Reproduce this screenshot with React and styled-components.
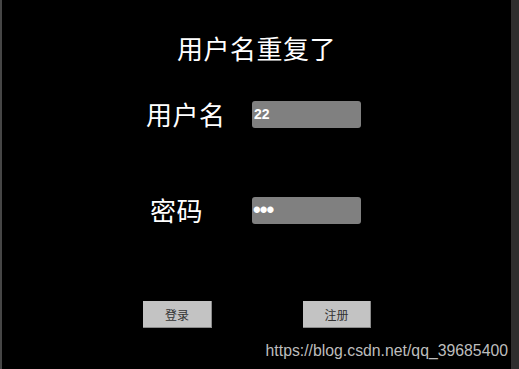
import React from "react";
import styled, { createGlobalStyle } from "styled-components";

const Global = createGlobalStyle`
  html, body { margin: 0; padding: 0; background: #000; }
  body { width: 519px; height: 369px; overflow: hidden; }
`;

const Frame = styled.div`
  display: flex;
  width: 519px;
  height: 369px;
  background: #000;
`;

const Edge = styled.div`
  width: ${(p) => p.$w}px;
  flex: none;
  background: ${(p) => p.$c};
`;

const Main = styled.div`
  flex: 1;
  display: flex;
  flex-direction: column;
  font-family: "Noto Sans CJK SC", "Noto Sans", sans-serif;
  color: #fff;
`;

const Title = styled.h1`
  margin: 30px 0 0;
  font-size: 26px;
  font-weight: 400;
  line-height: 36px;
  text-align: center;
  letter-spacing: 0.5px;
`;

const Form = styled.div`
  display: flex;
  flex-direction: column;
  gap: 60px;
  margin-top: 30px;
  padding-left: 144px;
`;

const Row = styled.div`
  display: grid;
  grid-template-columns: 106px 109px;
  align-items: center;
`;

const Label = styled.label`
  font-size: 26px;
  line-height: 36px;
  padding-left: ${(p) => p.$indent || 0}px;
  letter-spacing: 0.5px;
`;

const Field = styled.input`
  box-sizing: border-box;
  width: 109px;
  height: 27px;
  margin: 0;
  padding: 0 2px;
  border: none;
  border-radius: 3px;
  background: #808080;
  color: #fff;
  font-family: "Liberation Sans", Arial, sans-serif;
  font-size: 14px;
  font-weight: 700;
  outline: none;
  &[type="password"] {
    font-size: 22px;
    letter-spacing: -1px;
    padding-left: 1px;
  }
`;

const Buttons = styled.div`
  display: flex;
  gap: 91px;
  margin-top: 73px;
  padding-left: 141px;
`;

const Button = styled.button`
  box-sizing: border-box;
  width: ${(p) => p.$w}px;
  height: 27px;
  margin: 0;
  padding: 0;
  background: #c3c3c3;
  border: none;
  border-right: 1px solid #8a8a8a;
  border-bottom: 1px solid #8a8a8a;
  color: #333;
  font-family: "Noto Sans CJK SC", sans-serif;
  font-size: 12px;
  cursor: pointer;
`;

const Watermark = styled.div`
  margin-top: auto;
  margin-bottom: 9px;
  align-self: flex-end;
  margin-right: 3px;
  color: #bdbdbd;
  font-family: "Liberation Sans", Arial, sans-serif;
  font-size: 15.8px;
  line-height: 18px;
`;

export default function App() {
  return (
    <>
      <Global />
      <Frame>
        <Edge $w={2} $c="#464646" />
        <Main>
          <Title>用户名重复了</Title>
          <Form>
            <Row>
              <Label>用户名</Label>
              <Field type="text" defaultValue="22" readOnly />
            </Row>
            <Row>
              <Label $indent={4}>密码</Label>
              <Field type="password" defaultValue="abc" readOnly />
            </Row>
          </Form>
          <Buttons>
            <Button $w={69}>登录</Button>
            <Button $w={68}>注册</Button>
          </Buttons>
          <Watermark>https://blog.csdn.net/qq_39685400</Watermark>
        </Main>
        <Edge $w={8} $c="#2e2e2e" />
      </Frame>
    </>
  );
}
